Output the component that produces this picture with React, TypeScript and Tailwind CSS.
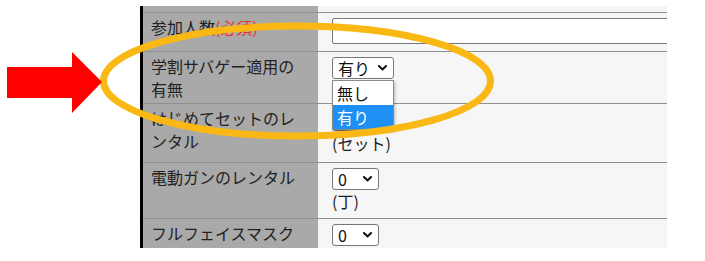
import { ReactNode } from "react";

const jp = { fontFamily: '"Noto Sans CJK JP", "Noto Sans", sans-serif' };

function Chevron() {
  return (
    <svg className="w-[9px] h-[6px] shrink-0" viewBox="0 0 9 6" fill="none">
      <path d="M1 1l3.5 3.5L8 1" stroke="#111" strokeWidth={2} strokeLinecap="round" strokeLinejoin="round" />
    </svg>
  );
}

function FakeSelect({ value, width }: { value: string; width: string }) {
  return (
    <div
      className={`${width} h-[22px] bg-white border border-[#767676] rounded-[3px] flex items-center justify-between pl-[5px] pr-[6px] text-[16px] leading-none text-[#111]`}
    >
      <span>{value}</span>
      <Chevron />
    </div>
  );
}

function Row({ label, height, children }: { label: ReactNode; height: string; children?: ReactNode }) {
  return (
    <div className={`flex border-t border-[#8f8f8f] ${height}`}>
      <div className="w-[175px] shrink-0 bg-[#a9a9a9] pl-[8px] pr-[13px] pt-[3px] text-[16px] leading-[23px] text-[#222]">
        {label}
      </div>
      <div className="flex-1 bg-[#f6f6f6] pl-[14px] pt-[5px] text-[16px] leading-[23px] text-[#222]">{children}</div>
    </div>
  );
}

export default function App() {
  return (
    <div className="relative w-[705px] h-[261px] bg-white overflow-hidden" style={jp}>
      <div className="ml-[140px] mt-[6px] w-[527px] h-[242px] overflow-hidden border-l-[3px] border-black">
        {/* previous row, only the bottom edge shows */}
        <div className="flex h-[6px]">
          <div className="w-[175px] bg-[#a9a9a9]" />
          <div className="flex-1 bg-[#f6f6f6]" />
        </div>

        <Row
          height="h-[39px]"
          label={
            <>
              参加人数<span className="text-[#e8322b]">(必須)</span>
            </>
          }
        >
          <div className="w-[420px] h-[26px] mt-[0px] bg-white border border-[#767676] rounded-[2px]" />
        </Row>

        <Row height="h-[52px]" label="学割サバゲー適用の有無">
          <div className="relative w-[62px]">
            <FakeSelect value="有り" width="w-[62px]" />
            {/* open dropdown list */}
            <div className="absolute left-0 top-[23px] z-10 w-[62px] bg-white border border-[#8a8a8a] shadow-[1px_2px_3px_rgba(0,0,0,0.25)]">
              <div className="h-[24px] pl-[4px] leading-[24px] text-[#111]">無し</div>
              <div className="h-[24px] pl-[4px] leading-[24px] bg-[#1e8ff5] text-white">有り</div>
            </div>
          </div>
        </Row>

        <Row height="h-[59px]" label="はじめてセットのレンタル">
          <FakeSelect value="0" width="w-[47px]" />
          <div className="mt-[1px]">(セット)</div>
        </Row>

        <Row height="h-[56px]" label="電動ガンのレンタル">
          <FakeSelect value="0" width="w-[47px]" />
          <div>(丁)</div>
        </Row>

        <Row height="h-[60px]" label="フルフェイスマスクのレンタル">
          <FakeSelect value="0" width="w-[47px]" />
        </Row>
      </div>

      {/* annotation: arrow and ellipse drawn over the form */}
      <svg className="absolute inset-0 pointer-events-none z-20" width={705} height={261} viewBox="0 0 705 261">
        <ellipse cx={297} cy={81} rx={193.5} ry={55} fill="none" stroke="#f9b814" strokeWidth={7} />
        <polygon points="7,67 72,67 72,52 102,82 72,113 72,98 7,98" fill="#ff0000" />
      </svg>
    </div>
  );
}
